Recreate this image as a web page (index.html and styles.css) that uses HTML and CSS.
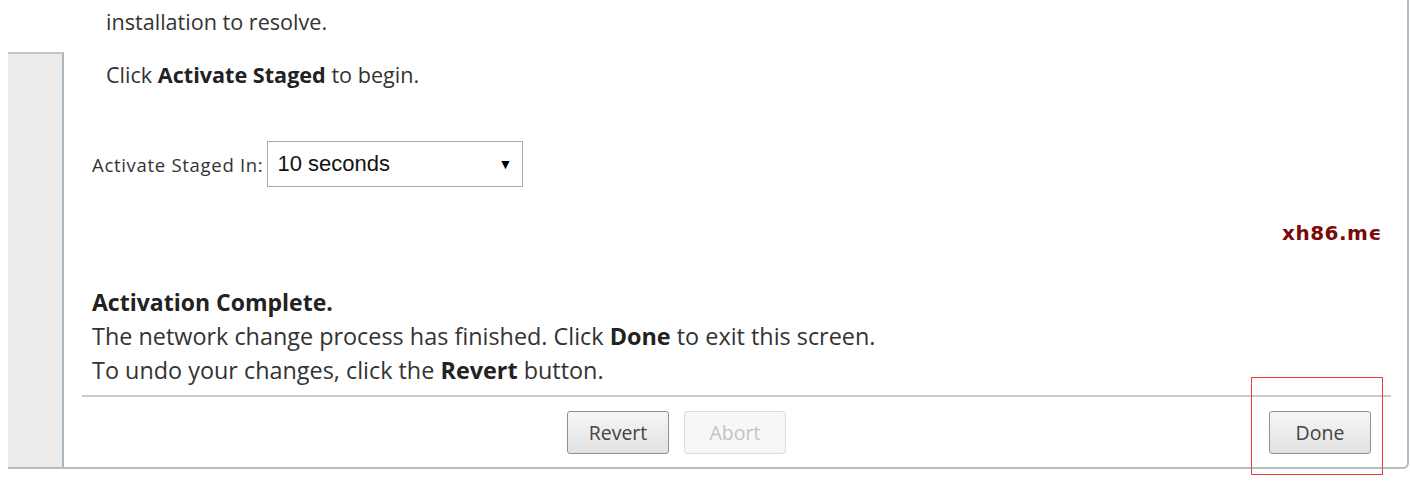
FILE: index.html
```html
<!DOCTYPE html>
<html lang="en">
<head>
  <meta charset="UTF-8">
  <title>Activate Staged</title>
  <link rel="stylesheet" href="styles.css">
</head>
<body>
  <div class="dialog">
    <div class="sidebar"></div>
    <div class="main">
      <p class="step first">installation to resolve.</p>
      <p class="step">Click <b>Activate Staged</b> to begin.</p>

      <div class="delay-row">
        <label>Activate Staged In:</label>
        <div class="select">
          <span>10 seconds</span>
          <span class="arrow">&#9660;</span>
        </div>
      </div>

      <div class="status">
        <h3>Activation Complete.</h3>
        <p>The network change process has finished. Click <b>Done</b> to exit this screen.</p>
        <p>To undo your changes, click the <b>Revert</b> button.</p>
      </div>

      <div class="footer">
        <div class="actions">
          <button class="btn">Revert</button>
          <button class="btn" disabled>Abort</button>
        </div>
        <button class="btn">Done</button>
      </div>
    </div>
  </div>

  <!-- watermark + highlight box drawn over the screen -->
  <div class="watermark">xh86.m&#1013;</div>
  <div class="highlight"></div>
</body>
</html>
```

FILE: styles.css
```css
body {
  margin: 0;
  background: #fff;
  font-family: "Open Sans", "Noto Sans", sans-serif;
  color: #333;
  position: relative;
  height: 482px;
  overflow: hidden;
}

.dialog {
  display: flex;
  margin-left: 8px;
  width: 1399px;
  height: 467px;
  border-right: 2px solid #b4bcc5;
  border-bottom: 2px solid #b4bcc5;
  border-bottom-right-radius: 6px;
}

.sidebar {
  width: 54px;
  margin-top: 52px;
  background: #ececec;
  border-top: 2px solid #c4c4c4;
  border-right: 2px solid #aab6c2;
}

.main {
  flex: 1;
  display: flex;
  flex-direction: column;
}

.step {
  margin: 0;
  padding-left: 42px;
  font-size: 21.6px;
  line-height: 26px;
}
.step.first {
  margin-top: 9px;
  margin-bottom: 27px;
}

.step b {
  color: #222;
}

.delay-row {
  display: flex;
  align-items: center;
  margin-top: 53px;
  padding-left: 28px;
}

.delay-row label {
  font-size: 18.5px;
  letter-spacing: 0.7px;
  margin-right: 4px;
}

.select {
  box-sizing: border-box;
  width: 256px;
  height: 46px;
  border: 1px solid #a9a9a9;
  display: flex;
  align-items: center;
  justify-content: space-between;
  padding: 0 10px 0 9px;
  font-family: "Liberation Sans", Arial, sans-serif;
  font-size: 22px;
  color: #111;
}
.select .arrow {
  font-size: 14px;
  color: #000;
}

.status {
  margin-top: 98px;
  padding-left: 28px;
  font-size: 23.4px;
}
.status h3 {
  margin: 0;
  font-size: 23px;
  line-height: 34px;
  color: #222;
}
.status p {
  margin: 0;
  line-height: 34px;
}
.status b {
  color: #222;
}

.footer {
  display: flex;
  align-items: center;
  justify-content: space-between;
  margin: 8px 16px 0 18px;
  border-top: 2px solid #cacaca;
  padding: 14px 20px 0 485px;
}

.actions {
  display: flex;
  gap: 15px;
}

.btn {
  width: 102px;
  height: 43px;
  font-family: "Open Sans", "Noto Sans", sans-serif;
  font-size: 19.5px;
  color: #444;
  background: linear-gradient(#f6f6f6, #e2e2e2);
  border: 1px solid #8f8f8f;
  border-radius: 3px;
}
.btn:disabled {
  color: #c4c4c4;
  background: #f7f7f7;
  border-color: #dcdcdc;
}

.watermark {
  position: absolute;
  left: 1282px;
  top: 221px;
  font-family: "DejaVu Sans", sans-serif;
  font-weight: bold;
  font-size: 20px;
  color: #7a0a0a;
  letter-spacing: 0.5px;
}

.highlight {
  position: absolute;
  left: 1251px;
  top: 377px;
  width: 130px;
  height: 96px;
  border: 1px solid #f03c3c;
}
```
